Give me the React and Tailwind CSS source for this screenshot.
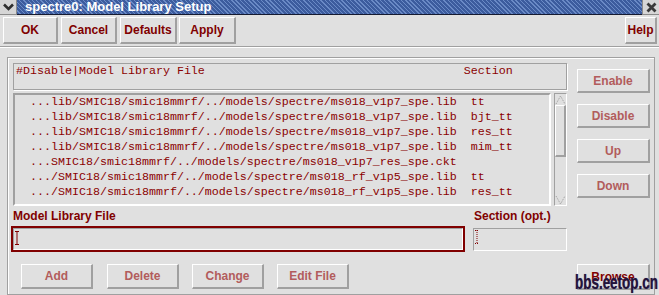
import React from "react";

const rows = [
  ["...lib/SMIC18/smic18mmrf/../models/spectre/ms018_v1p7_spe.lib", "tt"],
  ["...lib/SMIC18/smic18mmrf/../models/spectre/ms018_v1p7_spe.lib", "bjt_tt"],
  ["...lib/SMIC18/smic18mmrf/../models/spectre/ms018_v1p7_spe.lib", "res_tt"],
  ["...lib/SMIC18/smic18mmrf/../models/spectre/ms018_v1p7_spe.lib", "mim_tt"],
  ["...SMIC18/smic18mmrf/../models/spectre/ms018_v1p7_res_spe.ckt", ""],
  [".../SMIC18/smic18mmrf/../models/spectre/ms018_rf_v1p5_spe.lib", "tt"],
  [".../SMIC18/smic18mmrf/../models/spectre/ms018_rf_v1p5_spe.lib", "res_tt"],
];

// raised Tk-style bevel
const raised =
  "border-t border-l border-b-2 border-r-2 border-t-white border-l-white border-b-[#a0a0a0] border-r-[#a0a0a0]";
const sunken =
  "border border-t-[#a0a0a0] border-l-[#a0a0a0] border-b-white border-r-white";

const Btn = ({ children, disabled, className = "" }) => (
  <div
    className={`${raised} ${className} flex items-center justify-center bg-[#e0e0e0] text-[12px] font-bold leading-none`}
  >
    <span className={disabled ? "text-[#b25c5c]" : "text-[#800000]"}>{children}</span>
  </div>
);

const IBeam = ({ dotted }) => (
  <svg width="5" height="14" viewBox="0 0 5 14" className="block">
    <path
      d="M0 0.5H4M2 0V14M0 13.5H4"
      stroke="#800000"
      strokeWidth="1"
      fill="none"
      strokeDasharray={dotted ? "1 1" : undefined}
    />
  </svg>
);

const Arrow = ({ down }) => (
  <svg width="11" height="10" viewBox="0 0 11 10" className="block">
    <path
      d={down ? "M1 1L5.5 9L10 1" : "M1 9L5.5 1L10 9"}
      stroke="#9a9a9a"
      strokeWidth="1"
      fill="none"
      strokeDasharray="1 1"
    />
  </svg>
);

export default function App() {
  return (
    <div className="relative w-[659px] h-[295px] overflow-hidden bg-[#e0e0e0] font-['Liberation_Sans',Arial,sans-serif]">
      {/* title bar */}
      <div className="flex h-[15px]">
        <div className="w-[17px] h-[15px] bg-[#d6d6d6] border-r border-b border-[#8a8a8a] flex items-center justify-center">
          <svg width="11" height="8" viewBox="0 0 11 8">
            <path d="M1 1.5L5.5 6L10 1.5" stroke="#2e2e2e" strokeWidth="2.6" fill="none" />
          </svg>
        </div>
        <div className="flex-1 h-[15px] border-b border-[#151a30] bg-[image:repeating-linear-gradient(45deg,#3c5c9e_0px,#3c5c9e_2px,#6a8ac6_2px,#6a8ac6_3px)] pl-[8px] text-white font-bold text-[13px] leading-[14px]">
          spectre0: Model Library Setup
        </div>
        <div className="w-[17px] h-[15px] bg-[#d6d6d6] border-l border-b border-[#8a8a8a] flex items-center justify-center">
          <svg width="11" height="11" viewBox="0 0 11 11">
            <path d="M1.5 1.5L9.5 9.5M9.5 1.5L1.5 9.5" stroke="#3a3a3a" strokeWidth="2.8" fill="none" />
          </svg>
        </div>
      </div>

      {/* toolbar */}
      <div className="flex h-[31px] pt-[2px] pl-[3px] pr-[2px]">
        <Btn className="w-[55px] h-[27px]">OK</Btn>
        <Btn className="w-[56px] h-[27px] ml-[3px]">Cancel</Btn>
        <Btn className="w-[57px] h-[27px] ml-[3px]">Defaults</Btn>
        <Btn className="w-[57px] h-[27px] ml-[2px]">Apply</Btn>
        <Btn className="w-[32px] h-[27px] ml-auto">Help</Btn>
      </div>
      <div className="h-[2px] border-t border-[#a0a0a0] border-b border-b-white" />

      {/* main frame */}
      <div className="mt-[9px] ml-[7px] w-[648px] h-[238px] border border-[#a0a0a0] shadow-[inset_1px_1px_0_#fff] pl-[5px] pt-[5px]">
        <div className="flex">
          <div className="w-[554px]">
            <div className="h-[27px] border border-[#a0a0a0] shadow-[1px_1px_0_#fff] pl-[2px]">
              <pre className="font-['Liberation_Mono',monospace] text-[11.67px] leading-[15px] text-[#8b0000]">
                {"#Disable|Model Library File".padEnd(64, " ") + "Section"}
              </pre>
            </div>
            <div className="flex mt-[3px] h-[113px]">
              <div className="w-[538px] h-[113px] border-2 border-t-[#a0a0a0] border-l-[#a0a0a0] border-b-white border-r-white pl-[1px] overflow-hidden">
                {rows.map(([file, sec], i) => (
                  <pre
                    key={i}
                    className="font-['Liberation_Mono',monospace] text-[11.67px] leading-[15px] text-[#8b0000]"
                  >
                    {"  " + file + "  " + sec}
                  </pre>
                ))}
              </div>
              <div className={`ml-[3px] w-[13px] h-[113px] ${sunken} flex flex-col`}>
                <div className="h-[11px] flex items-center justify-center">
                  <Arrow />
                </div>
                <div className={`h-[52px] ${raised}`} />
                <div className="flex-1" />
                <div className="h-[11px] flex items-center justify-center">
                  <Arrow down />
                </div>
              </div>
            </div>
          </div>
          <div className="ml-[10px] w-[73px] pt-[6px] flex flex-col gap-[11px]">
            <Btn disabled className="h-[24px]">Enable</Btn>
            <Btn disabled className="h-[24px]">Disable</Btn>
            <Btn disabled className="h-[24px]">Up</Btn>
            <Btn disabled className="h-[24px]">Down</Btn>
          </div>
        </div>

        {/* labels */}
        <div className="flex h-[20px] pt-[3px] text-[12px] font-bold leading-[15px] text-[#800000]">
          <div className="w-[461px]">Model Library File</div>
          <div>Section (opt.)</div>
        </div>

        {/* inputs */}
        <div className="flex h-[26px]">
          <div className="-ml-[2px] w-[454px] h-[26px] border-2 border-[#800000]">
            <div className={`h-full ${sunken} pl-[1px] pt-[2px]`}>
              <IBeam />
            </div>
          </div>
          <div className={`ml-[8px] mt-[2px] w-[94px] h-[23px] ${sunken} pl-[1px] pt-[1px]`}>
            <IBeam dotted />
          </div>
        </div>

        {/* bottom buttons */}
        <div className="flex mt-[12px] pl-[8px]">
          <Btn disabled className="w-[72px] h-[25px]">Add</Btn>
          <Btn disabled className="w-[72px] h-[25px] ml-[14px]">Delete</Btn>
          <Btn disabled className="w-[72px] h-[25px] ml-[13px]">Change</Btn>
          <Btn disabled className="w-[72px] h-[25px] ml-[13px]">Edit File</Btn>
          <Btn className="w-[73px] h-[26px] ml-[228px]">Browse</Btn>
        </div>
      </div>

      {/* watermark overlay */}
      <div className="absolute left-[575px] top-[271px] origin-left scale-x-[0.64] whitespace-nowrap font-['Liberation_Sans',Arial,sans-serif] text-[21px] font-bold leading-[22px] text-[#22133a] [text-shadow:0_0_1px_#6a5a8a]">
        bbs.eetop.cn
      </div>
    </div>
  );
}
